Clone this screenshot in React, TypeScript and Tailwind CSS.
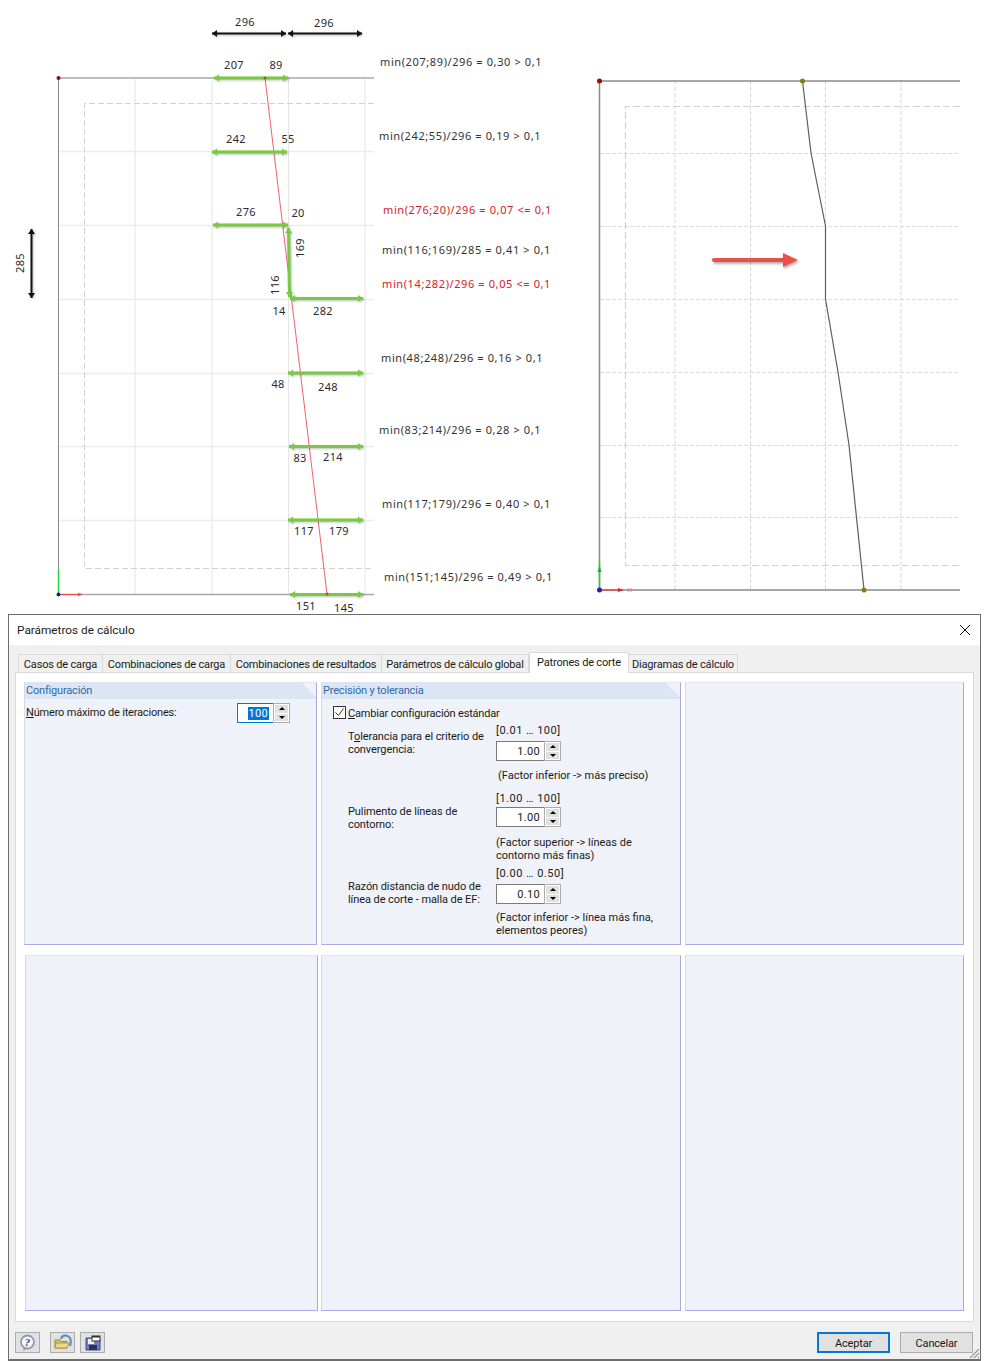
const NUMS: [string, number, number, number?][] = [
  ["296", 245, 22], ["296", 324, 23], ["207", 234, 65], ["89", 276, 65],
  ["242", 236, 139], ["55", 288, 139], ["276", 246, 212], ["20", 298, 213],
  ["169", 300, 248, -90], ["116", 275, 285, -90], ["14", 279, 311], ["282", 323, 311],
  ["285", 20, 263, -90], ["48", 278, 384], ["248", 328, 387], ["83", 300, 458],
  ["214", 333, 457], ["117", 304, 531], ["179", 339, 531], ["151", 306, 606], ["145", 344, 608],
];

const FORMULAS: [string, number, number, boolean?][] = [
  ["min(207;89)/296 = 0,30 > 0,1", 380, 62],
  ["min(242;55)/296 = 0,19 > 0,1", 379, 136],
  ["min(276;20)/296 = 0,07 <= 0,1", 383, 210, true],
  ["min(116;169)/285 = 0,41 > 0,1", 382, 250],
  ["min(14;282)/296 = 0,05 <= 0,1", 382, 284, true],
  ["min(48;248)/296 = 0,16 > 0,1", 381, 358],
  ["min(83;214)/296 = 0,28 > 0,1", 379, 430],
  ["min(117;179)/296 = 0,40 > 0,1", 382, 504],
  ["min(151;145)/296 = 0,49 > 0,1", 384, 577],
];

const GREEN: [number, number, number, number][] = [
  [214, 78, 288, 78], [212, 152, 287, 152], [213, 225, 288, 225], [288.5, 228, 289.5, 297],
  [290, 298.5, 363, 298.5], [288, 373, 363, 373], [289, 446.5, 363, 446.5],
  [288, 520, 363, 520], [290, 594.5, 363, 594.5],
];

function Arrow({ x1, y1, x2, y2, color, w }: { x1: number; y1: number; x2: number; y2: number; color: string; w: number }) {
  const a = (Math.atan2(y2 - y1, x2 - x1) * 180) / Math.PI;
  return (
    <g className="drop-shadow-[1px_1px_1px_rgba(0,0,0,0.25)]">
      <line x1={x1} y1={y1} x2={x2} y2={y2} stroke={color} strokeWidth={w} />
      <polygon points="0,0 -5,-3.5 -5,3.5" fill={color} transform={`translate(${x2} ${y2}) rotate(${a})`} />
      <polygon points="0,0 5,-3.5 5,3.5" fill={color} transform={`translate(${x1} ${y1}) rotate(${a})`} />
    </g>
  );
}

function Drawing() {
  return (
    <svg width="994" height="614" className="block">
      {/* left model */}
      {[135, 212, 288.5, 365].map((x) => (
        <line key={x} x1={x} y1="78" x2={x} y2="594" stroke="#e4e4e4" />
      ))}
      {[151.5, 225.5, 299.5, 373.5, 446.5, 520.5].map((y) => (
        <line key={y} x1="58" y1={y} x2="374" y2={y} stroke="#ececec" strokeWidth="1.5" />
      ))}
      <path d="M374 103.5H84.5V568.5H374" fill="none" stroke="#d2d2d2" strokeDasharray="6 3" />
      <line x1="58" y1="78" x2="374" y2="78" stroke="#a8a8a8" strokeWidth="1.5" />
      <line x1="58" y1="594.5" x2="374" y2="594.5" stroke="#a8a8a8" strokeWidth="1.5" />
      <line x1="58.5" y1="78" x2="58.5" y2="594" stroke="#8a8a8a" />
      <line x1="265" y1="78" x2="327" y2="594" stroke="#f0626a" />
      <circle cx="58.5" cy="78" r="2" fill="#8b1010" />
      <line x1="58.5" y1="594" x2="58.5" y2="570" stroke="#22d63a" strokeWidth="1.5" />
      <line x1="58.5" y1="594.5" x2="78" y2="594.5" stroke="#ef4444" />
      <polygon points="78,592.5 78,596.5 83,594.5" fill="#d92a2a" opacity="0.6" />
      <circle cx="58.5" cy="594.5" r="2" fill="#20208a" />
      {GREEN.map(([x1, y1, x2, y2]) => (
        <Arrow key={`${x1}-${y1}`} x1={x1} y1={y1} x2={x2} y2={y2} color="#7ac943" w={3} />
      ))}
      <circle cx="265" cy="78" r="1.5" fill="#6d7a1c" />
      <circle cx="327" cy="594" r="1.5" fill="#6d7a1c" />
      <Arrow x1={212} y1={33.5} x2={286} y2={33.5} color="#111111" w={2} />
      <Arrow x1={288} y1={33.5} x2={362} y2={33.5} color="#111111" w={2} />
      <Arrow x1={31.5} y1={229} x2={31.5} y2={298} color="#111111" w={2} />
      {NUMS.map(([t, x, y, r]) => (
        <text
          key={`${t}-${x}`}
          x={x}
          y={y - 1}
          textAnchor="middle"
          dominantBaseline="central"
          transform={r ? `rotate(${r} ${x} ${y})` : undefined}
          className="fill-[#2b2b2b] text-[11px] tracking-[0.3px] [font-family:'Noto_Sans',sans-serif]"
        >
          {t}
        </text>
      ))}
      {FORMULAS.map(([t, x, y, red]) => (
        <text
          key={t}
          x={x}
          y={y - 1}
          dominantBaseline="central"
          className={`${red ? "fill-[#d5202a]" : "fill-[#333333]"} text-[11px] tracking-[0.6px] [font-family:'Noto_Sans',sans-serif]`}
        >
          {t}
        </text>
      ))}

      {/* right model */}
      {[675, 750.5, 825.5, 901].map((x) => (
        <line key={x} x1={x} y1="81" x2={x} y2="590" stroke="#d8d8d8" strokeDasharray="4 2" />
      ))}
      {[153.5, 226.5, 299.5, 372.5, 445.5, 517.5].map((y) => (
        <line key={y} x1="600" y1={y} x2="960" y2={y} stroke="#dcdcdc" strokeDasharray="4 2" />
      ))}
      <path d="M960 106.5H625.5V565.5H960" fill="none" stroke="#d2d2d2" strokeWidth="1.2" strokeDasharray="7 3" />
      <line x1="599.5" y1="81" x2="960" y2="81" stroke="#8a8a8a" strokeWidth="1.5" />
      <line x1="599.5" y1="590" x2="960" y2="590" stroke="#8a8a8a" strokeWidth="1.5" />
      <line x1="599.5" y1="81" x2="599.5" y2="590" stroke="#8a8a8a" strokeWidth="1.5" />
      <polyline
        points="802.5,81 811,153 825.5,226 825.5,299 838,372 849,445 864,590"
        fill="none"
        stroke="#5e5e5e"
        strokeWidth="1.2"
      />
      <circle cx="599.5" cy="81" r="2.5" fill="#8b1010" />
      <circle cx="802.5" cy="81" r="2.5" fill="#847c10" />
      <circle cx="864" cy="590" r="2.5" fill="#847c10" />
      <line x1="599.5" y1="590" x2="599.5" y2="562" stroke="#22d63a" strokeWidth="1.5" />
      <polygon points="599.5,566 597.5,572 601.5,572" fill="#1faa2e" />
      <line x1="599.5" y1="590" x2="622" y2="590" stroke="#ef4444" strokeWidth="1.5" />
      <polygon points="624,590 618,588 618,592" fill="#d92a2a" />
      <path d="M628 588v4M631 588v4M628 590h3" stroke="#ef6a6a" strokeWidth="0.8" fill="none" />
      <circle cx="599.5" cy="590" r="2.5" fill="#2222a8" />
      <g className="drop-shadow-[1px_2px_1px_rgba(0,0,0,0.3)]">
        <line x1="714" y1="260" x2="784" y2="260" stroke="#ea5048" strokeWidth="4" strokeLinecap="round" />
        <polygon points="783,253 783,267 798,260" fill="#ea5048" />
      </g>
    </svg>
  );
}

function Spinner({ value, selected, w }: { value: string; selected?: boolean; w: string }) {
  return (
    <div className="flex h-5 items-stretch">
      <div
        className={`${w} flex items-center justify-end border border-r-0 bg-white pr-1 tracking-[0.3px] ${
          selected ? "border-[#0078d7]" : "border-[#7a7a7a]"
        }`}
      >
        {selected ? <span className="bg-[#0078d7] px-px leading-[13px] text-white">{value}</span> : value}
      </div>
      <div className="flex w-[17px] flex-col gap-px border border-[#adadad] bg-white p-px">
        <div className="flex flex-1 items-center justify-center bg-[#e1e1e1]">
          <div className="h-0 w-0 border-x-[3px] border-b-[3px] border-x-transparent border-b-black" />
        </div>
        <div className="flex flex-1 items-center justify-center bg-[#e1e1e1]">
          <div className="h-0 w-0 border-x-[3px] border-t-[3px] border-x-transparent border-t-black" />
        </div>
      </div>
    </div>
  );
}

function Panel({ title, children, className }: { title?: string; children?: React.ReactNode; className?: string }) {
  return (
    <div className={`relative border border-r-[#a9a9e8] border-b-[#a9a9e8] border-t-[#dfe3f2] border-l-[#d4daee] bg-[#eff2f9] ${className ?? ""}`}>
      {title && (
        <div className="flex h-4 items-center bg-[#dce5f4] pb-0.5 pl-px text-[#2f6aa6] [clip-path:polygon(0_0,calc(100%-14px)_0,100%_14px,100%_100%,0_100%)]">
          {title}
        </div>
      )}
      {children}
    </div>
  );
}

function ValueGroup({
  label,
  range,
  value,
  note,
  labelPad,
  spinTop,
  noteClass,
  top,
}: {
  label: React.ReactNode;
  range: string;
  value: string;
  note: React.ReactNode;
  labelPad: string;
  spinTop: string;
  noteClass: string;
  top: string;
}) {
  return (
    <div className={`flex ${top}`}>
      <div className={`w-[174px] shrink-0 pl-[26px] tracking-[-0.08px] ${labelPad}`}>{label}</div>
      <div>
        <div className="tracking-[0.5px]">{range}</div>
        <div className={spinTop}>
          <Spinner value={value} w="w-[48px]" />
        </div>
        <div className={`tracking-normal ${noteClass}`}>{note}</div>
      </div>
    </div>
  );
}

function ToolButton({ children, className }: { children: React.ReactNode; className?: string }) {
  return (
    <div className={`flex h-[21px] w-[25px] items-center justify-center border border-[#adadad] bg-[#e1e1e1] ${className ?? ""}`}>
      {children}
    </div>
  );
}

const TABS = [
  ["Casos de carga", "w-[85px]"],
  ["Combinaciones de carga", "w-[128px]"],
  ["Combinaciones de resultados", "w-[151px]"],
  ["Parámetros de cálculo global", "w-[147px]"],
];

function Dialog() {
  return (
    <div className="relative mx-2 flex h-[747px] w-[973px] flex-col border border-b-2 border-[#6d6d6d] bg-[#f0f0f0] text-[11px] leading-[13px] tracking-[-0.18px] text-[#1a1a1a] [font-family:Roboto,sans-serif]">
      <div className="flex h-[30px] shrink-0 items-center justify-between bg-white pl-2 pr-[9px]">
        <span className="pt-px text-[11.8px] tracking-normal">Parámetros de cálculo</span>
        <svg width="12" height="12" viewBox="0 0 12 12" className="stroke-[#111111]">
          <path d="M1 1l10 10M11 1L1 11" fill="none" strokeWidth="1" />
        </svg>
      </div>

      <div className="flex h-[27px] shrink-0 items-end whitespace-nowrap pl-[9px]">
        {TABS.map(([t, w]) => (
          <div key={t} className={`${w} flex h-[18px] items-center justify-center border border-b-0 border-l-0 border-[#d9d9d9] pt-0.5 first:border-l`}>
            {t}
          </div>
        ))}
        <div className="z-10 -mb-px flex h-[21px] w-[100px] items-start justify-center border border-b-0 border-[#d9d9d9] bg-white pt-[3px]">
          Patrones de corte
        </div>
        <div className="flex h-[18px] w-[109px] items-center justify-center border border-b-0 border-l-0 border-[#d9d9d9] pt-0.5">
          Diagramas de cálculo
        </div>
      </div>

      <div className="mx-1.5 grid h-[650px] grid-cols-[293px_360px_279px] grid-rows-[263px_356px] gap-x-1 gap-y-2.5 border border-[#d9d9d9] bg-white pl-2 pr-[7px] pt-[9px]">
        <Panel title="Configuración">
          <div className="flex items-center justify-between pl-px pr-[26px] pt-[4px]">
            <span className="-mt-0.5">
              <u>N</u>úmero máximo de iteraciones:
            </span>
            <Spinner value="100" selected w="w-[36px]" />
          </div>
        </Panel>

        <Panel title="Precisión y tolerancia">
          <div className="box-content flex h-[13px] items-center pb-[5px] pl-[11px] pt-[7px]">
            <div className="mr-[2px] flex h-[13px] w-[13px] items-center justify-center border border-[#333333] bg-white">
              <svg width="11" height="11" viewBox="0 0 11 11">
                <path d="M1.5 5.5l3 3 5-7" fill="none" stroke="#333333" />
              </svg>
            </div>
            <span className="pt-px">
              <u>C</u>ambiar configuración estándar
            </span>
          </div>
          <ValueGroup
            top=""
            label={
              <>
                T<u>o</u>lerancia para el criterio de convergencia:
              </>
            }
            labelPad="pt-[6px] pr-1"
            range="[0.01 … 100]"
            value="1.00"
            spinTop="mt-1"
            noteClass="mt-[8px] pl-0.5"
            note="(Factor inferior -> más preciso)"
          />
          <ValueGroup
            top="mt-[10px]"
            label="Pulimento de líneas de contorno:"
            labelPad="pt-[13px] pr-5"
            range="[1.00 … 100]"
            value="1.00"
            spinTop="mt-0.5"
            noteClass="mt-[9px] w-[165px]"
            note="(Factor superior -> líneas de contorno más finas)"
          />
          <ValueGroup
            top="mt-[5px]"
            label="Razón distancia de nudo de línea de corte - malla de EF:"
            labelPad="pt-[13px] pr-1"
            range="[0.00 … 0.50]"
            value="0.10"
            spinTop="mt-1"
            noteClass="mt-[7px] w-[165px]"
            note="(Factor inferior -> línea más fina, elementos peores)"
          />
        </Panel>

        <Panel />
        <Panel className="-mr-px ml-px" />
        <Panel />
        <Panel />
      </div>

      <div className="flex flex-1 items-start justify-between pl-1.5 pr-[7px] pt-2.5">
        <div className="flex">
          <ToolButton>
            <svg width="17" height="17" viewBox="0 0 17 17">
              <circle cx="8.5" cy="8" r="6.5" fill="#f3f5f9" stroke="#8d9ab2" strokeWidth="1.8" />
              <path d="M5 13l-1 4 4-2.500z" fill="#8d9ab2" />
              <text x="8.5" y="12" textAnchor="middle" className="fill-[#1f3f8f] text-[11px] font-bold italic [font-family:'Liberation_Serif',serif]">
                ?
              </text>
            </svg>
          </ToolButton>
          <ToolButton className="ml-2.5">
            <svg width="18" height="17" viewBox="0 0 18 17">
              <path d="M7 5C8 1 13 0 16 4c1 2 1 5 0 8" fill="none" stroke="#5b86c4" strokeWidth="2" />
              <path d="M1 6h5l1.500 1.500H13V14H1z" fill="#d9c26b" stroke="#9a8a3d" />
              <path d="M2 9h13l-2 5H1z" fill="#ebd98c" stroke="#a8974a" />
            </svg>
          </ToolButton>
          <ToolButton className="ml-[5px]">
            <svg width="16" height="16" viewBox="0 0 16 16">
              <path d="M1 3h13l1 1v11H1z" fill="#6f7fc0" stroke="#3f4c86" />
              <rect x="4" y="10" width="8" height="5" fill="#2f3350" />
              <rect x="3" y="4" width="6" height="5" fill="#f1f1f1" />
              <rect x="7" y="1" width="8" height="5" fill="#ffffff" stroke="#333333" />
              <rect x="7" y="1" width="8" height="1.500" fill="#333333" />
            </svg>
          </ToolButton>
        </div>
        <div className="flex gap-2.5">
          <div className="flex h-[21px] w-[73px] items-center justify-center border-2 border-[#0078d7] bg-[#e1e1e1] pt-px">Aceptar</div>
          <div className="flex h-[21px] w-[73px] items-center justify-center border border-[#adadad] bg-[#e1e1e1] pt-px">Cancelar</div>
        </div>
      </div>
      <svg width="12" height="12" viewBox="0 0 12 12" className="absolute bottom-0 right-0">
        <path d="M11 2L2 11M11 6L6 11M11 10L10 11" stroke="#9a9a9a" strokeWidth="1.2" />
      </svg>
    </div>
  );
}

export default function App() {
  return (
    <div className="h-[1361px] w-[994px] overflow-hidden bg-white">
      <Drawing />
      <Dialog />
    </div>
  );
}
